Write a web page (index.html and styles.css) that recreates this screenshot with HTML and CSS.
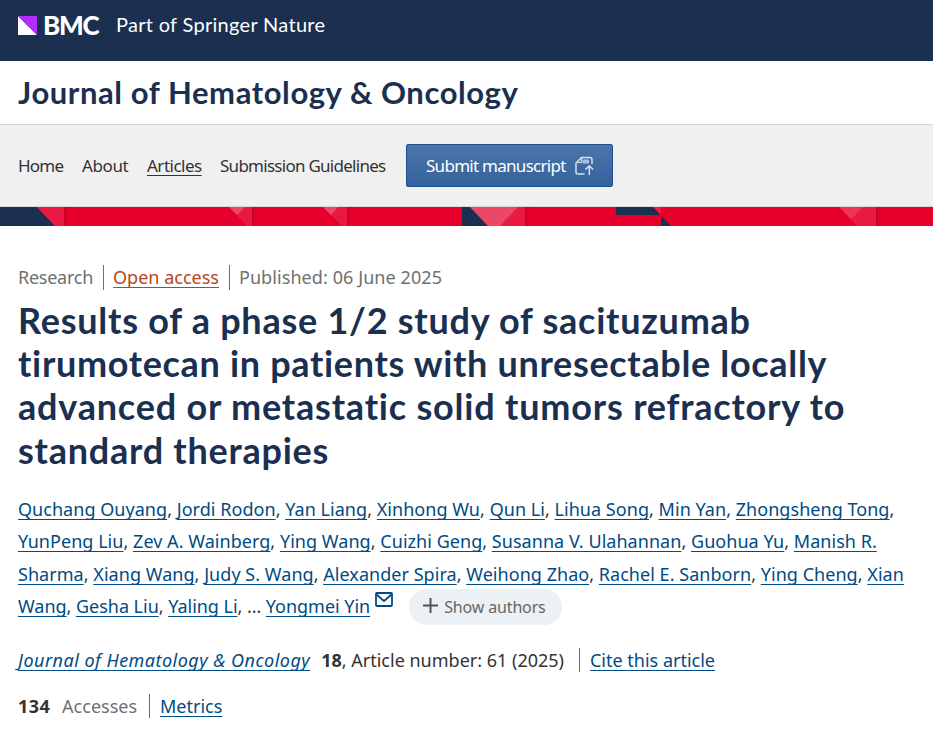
FILE: index.html
```
<!DOCTYPE html>
<html lang="en">
    <head>
        <meta charset="utf-8">
        <title>Results of a phase 1/2 study of sacituzumab tirumotecan | Journal of Hematology &amp; Oncology</title>
        <link rel="stylesheet" href="styles.css">
    </head>

    <body>
        <header class="top-bar">
            <svg class="logo-mark" width="19" height="19" viewBox="0 0 19 19">
                <path fill="#fff" d="M0 0v19h19z"/>
                <path fill="#b22dff" d="M0 0h19v19z"/>
            </svg>
            <span class="logo-name">BMC</span>
            <span class="logo-tagline">Part of Springer Nature</span>
        </header>

        <div class="journal-title"><span>Journal of Hematology &amp; Oncology</span></div>

        <nav class="nav">
            <a class="nav-home" href="#">Home</a>
            <a class="nav-about" href="#">About</a>
            <a class="nav-articles" href="#">Articles</a>
            <a class="nav-guidelines" href="#">Submission Guidelines</a>
            <a class="submit" href="#">
                <span>Submit manuscript</span>
                <svg width="19" height="20" viewBox="0 0 19 20" fill="none" stroke="#d6e1ee">
                    <path stroke-width="1.5" d="M9.500 18H3a2 2 0 0 1-2-2V7l5.500-5.500H15a2 2 0 0 1 2 2V8"/>
                    <path stroke-width="1.200" d="M6.500 2v3.500a1 1 0 0 1-1 1H1.500"/>
                    <path fill="#a9bfda" stroke="none" d="M7.500 3.500H14v4H7.500z"/>
                    <path stroke-width="1.500" d="M14.300 19v-9M10.500 13.500l3.800-3.800 3.800 3.800"/>
                </svg>
            </a>
        </nav>

        <svg class="banner" width="933" height="19" viewBox="0 0 933 19">
            <path fill="#e6002b" d="M0 0h933v19H0z"/>
            <path fill="#1b3051" d="M0 0h37l18 19H0z"/>
            <path fill="#e91b42" d="M37 0h27v19h-9z"/>
            <path fill="#e91840" d="M229 0h23v19h-5z"/>
            <path fill="#ec4668" d="M229 0h16l-8 8z"/>
            <path fill="#e91840" d="M323 0h24v19h-5z"/>
            <path fill="#ec4668" d="M323 0h15l-7 8z"/>
            <path fill="#1b3051" d="M462 0h8l18 19h-26z"/>
            <path fill="#e91b42" d="M518 0h7v19h-26z"/>
            <path fill="#ec4668" d="M470 0h48l-18 19h-12z"/>
            <path fill="#1b3051" d="M616 0h37l18 19h-10V8h-45z"/>
            <path fill="#e91b42" d="M653 0h8v8z"/>
            <path fill="#e91b42" d="M839 0h37v19h-19z"/>
            <path fill="#eb3557" d="M839 0h24l-12 12z"/>
            <path fill="#c70028" d="M64 0h1.500v19H64zM252 0h1.500v19H252zM347 0h1.500v19H347zM525 0h1.500v19H525zM876 0h1.500v19H876z"/>
            <path fill="#d90029" d="M65.500 0h2v19h-2zM253.500 0h2v19h-2zM348.500 0h2v19h-2zM526.500 0h2v19h-2zM877.500 0h2v19h-2z"/>
        </svg>

        <main class="article">
            <ul class="identifiers">
                <li class="id-type">Research</li>
                <li class="id-access"><a href="#">Open access</a></li>
                <li class="id-date">Published: 06 June 2025</li>
            </ul>

            <h1>
                <span class="t1">Results of a phase 1/2 study of sacituzumab</span>
                <span class="t2">tirumotecan in patients with unresectable locally</span>
                <span class="t3">advanced or metastatic solid tumors refractory to</span>
                <span class="t4">standard therapies</span>
            </h1>

            <div class="authors">
                <div class="line"><a href="#">Quchang Ouyang</a>, <a href="#">Jordi Rodon</a>, <a href="#">Yan Liang</a>, <a href="#">Xinhong Wu</a>, <a href="#">Qun Li</a>, <a href="#">Lihua Song</a>, <a href="#">Min Yan</a>, <a href="#">Zhongsheng Tong</a>,</div>
                <div class="line"><a href="#">YunPeng Liu</a>, <a href="#">Zev A. Wainberg</a>, <a href="#">Ying Wang</a>, <a href="#">Cuizhi Geng</a>, <a href="#">Susanna V. Ulahannan</a>, <a href="#">Guohua Yu</a>, <a href="#">Manish R.</a></div>
                <div class="line"><a href="#">Sharma</a>, <a href="#">Xiang Wang</a>, <a href="#">Judy S. Wang</a>, <a href="#">Alexander Spira</a>, <a href="#">Weihong Zhao</a>, <a href="#">Rachel E. Sanborn</a>, <a href="#">Ying Cheng</a>, <a href="#">Xian</a></div>
                <div class="line last">
                    <span><a href="#">Wang</a>, <a href="#">Gesha Liu</a>, <a href="#">Yaling Li</a>, … <a href="#">Yongmei Yin</a></span>
                    <svg class="mail" width="18" height="15" viewBox="0 0 18 15" fill="none" stroke="#004b83" stroke-width="1.800">
                        <rect x="1" y="1" width="16" height="13" rx="1"/>
                        <path d="M1.500 2.500L9 9l7.500-6.500"/>
                    </svg>
                    <button class="show-authors">
                        <svg width="15" height="15" viewBox="0 0 15 15" stroke="#555" stroke-width="2">
                            <path d="M7.500 0v15M0 7.500h15"/>
                        </svg>
                        <span>Show authors</span>
                    </button>
                </div>
            </div>

            <div class="info">
                <a class="journal-link" href="#">Journal of Hematology &amp; Oncology</a>
                <span class="volume"><b>18</b>, Article number: 61 (2025)</span>
                <a class="cite" href="#"><span>Cite this article</span></a>
            </div>

            <div class="metrics">
                <b>134</b>
                <span class="accesses">Accesses</span>
                <a class="metrics-link" href="#"><span>Metrics</span></a>
            </div>
        </main>
    </body>
</html>
```
FILE: styles.css
```
* {
    box-sizing: border-box;
}

body {
    margin: 0;
    background-color: #fff;
    color: #333;
    font-family: "Noto Sans", "Open Sans", sans-serif;
    font-size: 18px;
    white-space: nowrap;
    overflow: hidden;
}

a {
    color: #004b83;
    text-decoration: underline;
    text-decoration-thickness: 1px;
    text-underline-offset: 3px;
    text-decoration-skip-ink: none;
}

.top-bar {
    display: flex;
    align-items: center;
    height: 61px;
    padding: 0 18px 10px;
    background-color: #1b3051;
    color: #fff;
    font-family: Lato, sans-serif;
}

.logo-name {
    width: 73px;
    margin-left: 6px;
    padding-bottom: 1px;
    font-size: 26px;
    font-weight: 900;
    letter-spacing: -1.2px;
}

.logo-tagline {
    padding-bottom: 3px;
    font-size: 20px;
    letter-spacing: 0.3px;
}

.journal-title {
    display: flex;
    align-items: center;
    height: 64px;
    padding: 0 0 2px 18px;
    border-bottom: 1px solid #d5d5d5;
    color: #1b3051;
    font-family: Lato, sans-serif;
    font-size: 31px;
    font-weight: 700;
    letter-spacing: 0.58px;
}

.nav {
    display: flex;
    align-items: center;
    height: 82px;
    padding-left: 18px;
    background-color: #f0f0f0;
    border-bottom: 1px solid #cedbe0;
    font-size: 17px;
    letter-spacing: -0.8px;
}

.nav a {
    color: #333;
    text-decoration: none;
}

.nav .nav-articles {
    text-decoration: underline;
    text-underline-offset: 3px;
}

.nav-home {
    width: 64px;
}

.nav-about {
    width: 65px;
    letter-spacing: -0.4px;
}

.nav-articles {
    width: 54px;
    margin-right: 19px;
    letter-spacing: -0.5px;
}

.nav-guidelines {
    width: 186px;
    letter-spacing: -0.73px;
}

.nav .submit {
    display: flex;
    align-items: center;
    justify-content: space-between;
    width: 207px;
    height: 43px;
    padding: 0 18px 0 19px;
    border: 1px solid #1a4f92;
    border-radius: 2px;
    background-image: linear-gradient(#4d76a9, #33629d);
    color: #fff;
    letter-spacing: -0.72px;
}

.banner {
    display: block;
}

.article {
    padding: 38px 18px 0;
}

.identifiers {
    display: flex;
    align-items: center;
    height: 27px;
    margin: 0;
    padding: 0;
    list-style: none;
    color: #6f6f6f;
    line-height: 25px;
}

.identifiers li + li {
    margin-left: 10px;
    padding-left: 9px;
    border-left: 1px solid #6f6f6f;
}

.id-type {
    letter-spacing: -0.25px;
}

.id-date {
    letter-spacing: 0.08px;
}

.id-access a {
    color: #b74616;
}

h1 {
    margin: 8px 0 0;
    color: #1b3051;
    font-family: Lato, sans-serif;
    font-size: 36px;
    font-weight: 700;
    line-height: 43.2px;
    letter-spacing: 0.75px;
}

h1 span {
    display: block;
}

h1 .t2 {
    letter-spacing: 0.67px;
}

h1 .t3 {
    letter-spacing: 0.8px;
}

.authors {
    margin-top: 21px;
}

.line {
    height: 32.4px;
    line-height: 32.4px;
    letter-spacing: 0.04px;
}

.last {
    display: flex;
    letter-spacing: -0.03px;
}

.mail {
    margin: 2px 0 0 5px;
}

.show-authors {
    display: flex;
    align-items: center;
    width: 153px;
    height: 36px;
    margin: -1px 0 0 16px;
    padding: 0 0 0 14px;
    border: none;
    border-radius: 18px;
    background-color: #ebf1f5;
    color: #666;
    font-family: inherit;
    font-size: 16px;
    letter-spacing: -0.15px;
}

.show-authors svg {
    margin: 0 6px 2px 0;
}

.info {
    display: flex;
    align-items: center;
    height: 26px;
    margin-top: 25px;
}

.journal-link {
    margin-right: 11px;
    font-style: italic;
    letter-spacing: 0.48px;
}

.cite {
    margin-left: 15px;
    padding-left: 10px;
    border-left: 1px solid #6f6f6f;
}

.metrics {
    display: flex;
    align-items: center;
    height: 26px;
    margin-top: 20px;
}

.metrics b {
    letter-spacing: 0.4px;
}

.accesses {
    margin-left: 12px;
    color: #6f6f6f;
}

.metrics-link {
    margin-left: 12px;
    padding-left: 10px;
    border-left: 1px solid #6f6f6f;
}
```
